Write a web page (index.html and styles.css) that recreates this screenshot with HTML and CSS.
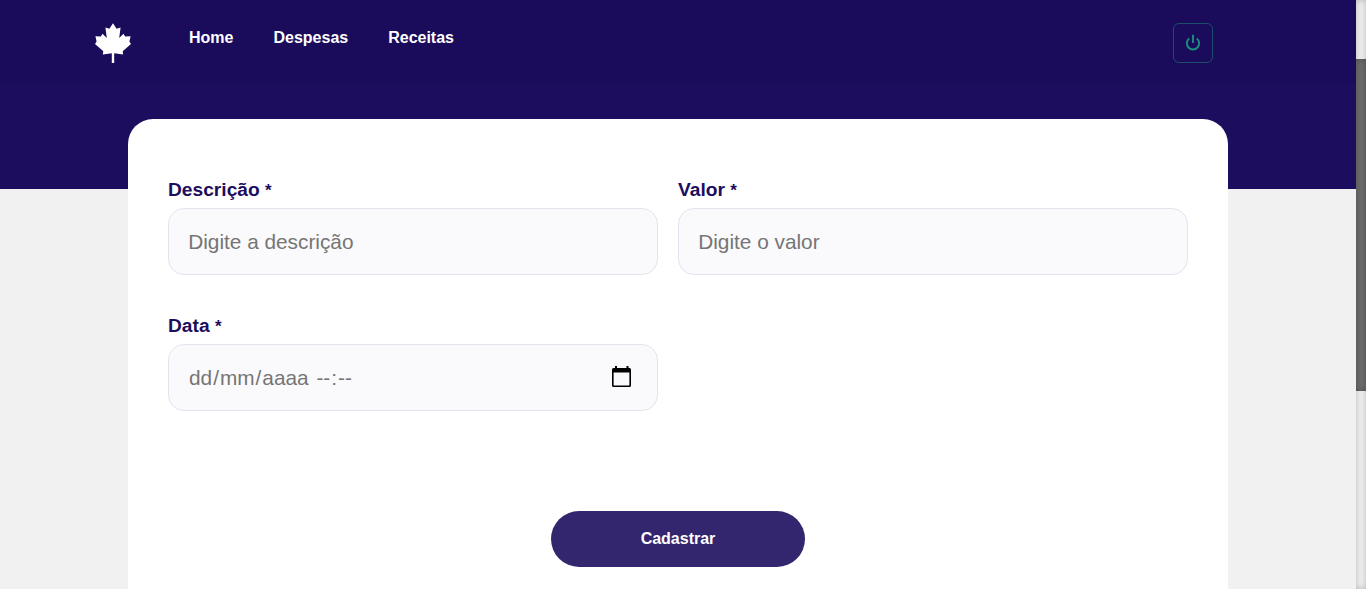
FILE: index.html
```html
<!DOCTYPE html>
<html lang="pt-BR">
<head>
<meta charset="utf-8">
<title>Cadastrar</title>
<link rel="stylesheet" href="styles.css">
</head>
<body>
<div class="page">
  <header class="header">
    <svg class="logo" viewBox="0 0 36 40" fill="#fff"><path d="M18 .3l3.600 5.500 4-1.300L24.200 15l4.300-4.300 1.600 2.900 5.500-.400-1.200 5.300 1.600 2.500-8.300 7.300.5 3.200-9-1.200V40h-2.400v-9.700l-9 1.200.5-3.200L0 21l1.600-2.500L.4 13.200l5.500.400 1.600-2.900L11.800 15 10.400 4.500l4 1.300z"/></svg>
    <nav class="nav"><a>Home</a><a>Despesas</a><a>Receitas</a></nav>
    <button class="logout" aria-label="Sair">
      <svg width="16" height="18" viewBox="0 0 16 18" fill="none" stroke="#1b8f80" stroke-width="1.900"><path d="M8 .8v8.200M4.200 4.600a6.100 6.100 0 1 0 7.600 0"/></svg>
    </button>
  </header>
  <main class="content">
    <form class="card">
      <div class="field"><label class="label">Descrição <span class="required">*</span></label><input class="input" placeholder="Digite a descrição"></div>
      <div class="field"><label class="label">Valor <span class="required">*</span></label><input class="input" placeholder="Digite o valor"></div>
      <div class="field"><label class="label">Data <span class="required">*</span></label>
        <div class="input date">
          <span class="date-text"><span>dd</span>/<span>mm</span>/<span>aaaa</span> <span class="time">--</span>:<span>--</span></span>
          <svg class="calendar" width="19" height="21" viewBox="0 0 19 21"><path fill-rule="evenodd" d="M3 0h2v2h9.500V0h2v2h1Q19 2 19 3.500v16Q19 21 17.500 21h-16Q0 21 0 19.500v-16Q0 2 1.500 2H3zM1.600 6.600v12.800h15.800V6.600z"/></svg>
        </div>
      </div>
      <button type="button" class="submit">Cadastrar</button>
    </form>
  </main>
</div>
<div class="scrollbar"><div class="thumb"></div></div>
</body>
</html>
```
FILE: styles.css
```css
* { box-sizing: border-box; }
body { margin: 0; height: 589px; overflow: hidden; display: flex; font-family: "Liberation Sans", Arial, sans-serif; }
.page { flex: 1; background: #f1f1f1; }
.header { height: 84px; background: #1a0b5b; display: flex; align-items: flex-start; padding: 23px 143px 0 95px; }
.logo { width: 36px; height: 40px; overflow: visible; }
.nav { display: flex; gap: 40px; margin: 6px auto 0 58px; color: #fff; font-size: 16px; font-weight: bold; line-height: 18px; }
.logout { width: 40px; height: 40px; padding: 0; border: 1px solid #194e6e; border-radius: 6px; background: transparent; display: flex; align-items: center; justify-content: center; }
.content { height: 505px; padding: 35px 128px 0; background: linear-gradient(#1d0d5e 105px, #f1f1f1 105px); }
.card { height: 470px; padding: 60px 40px 0; background: #fff; border-radius: 25px 25px 0 0; display: grid; grid-template-columns: 490px 510px; column-gap: 20px; row-gap: 40px; align-content: start; }
.field { display: flex; flex-direction: column; height: 96px; }
.label { height: 29px; line-height: 22px; font-size: 19.2px; font-weight: bold; color: #1d0d5e; }
.required { font-size: 17px; line-height: 1; }
.input { width: 100%; height: 67px; padding: 0 20px; margin: 0; border: 1px solid #e4e3ee; border-radius: 16px; background: #fafafc; font-family: inherit; font-size: 20.8px; color: #757575; outline: none; }
.input::placeholder { color: #757575; opacity: 1; }
.field > input.input { padding-left: 19.2px; }
.date { display: flex; align-items: center; justify-content: space-between; padding-right: 26px; }
.date-text span { padding: 0 1px; }
.date-text { margin-left: -1px; }
.calendar { margin-top: -2px; }
.submit { grid-column: 1 / -1; justify-self: center; width: 254px; height: 56px; margin: 60px 0 0; border: 0; border-radius: 28px; background: #33266f; color: #fff; font: bold 16px "Liberation Sans", Arial, sans-serif; }
.scrollbar { width: 10px; padding-top: 59px; background: #f1f1f1; box-shadow: inset 0 0 6px rgba(0,0,0,.25); }
.thumb { height: 332px; background: #6d6d6d; box-shadow: inset 0 0 6px rgba(0,0,0,.3); }
```
